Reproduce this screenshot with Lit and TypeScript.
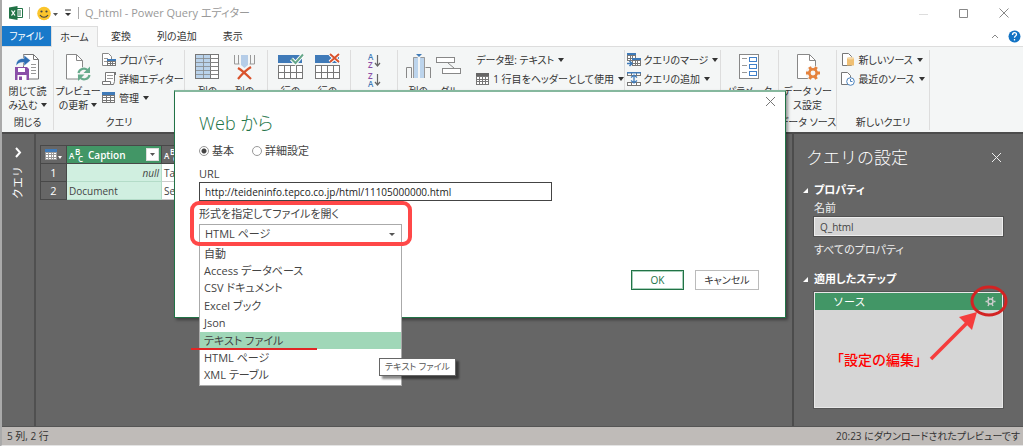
import { LitElement, html, css, svg, nothing, TemplateResult } from "lit";
import { customElement, property, state } from "lit/decorators.js";
import { classMap } from "lit/directives/class-map.js";

const table = (x: number, y: number, w: number, h: number, cols: number, rows: number, stroke = "#777") => svg`
  <rect x=${x + 0.5} y=${y + 0.5} width=${w} height=${h} fill="#fff" stroke=${stroke}/>
  ${Array.from({ length: cols - 1 }, (_, i) => {
    const px = Math.round(x + ((i + 1) * w) / cols) + 0.5;
    return svg`<path d="M${px} ${y + 1}v${h}" stroke=${stroke}/>`;
  })}
  ${Array.from({ length: rows - 1 }, (_, i) => {
    const py = Math.round(y + ((i + 1) * h) / rows) + 0.5;
    return svg`<path d="M${x + 1} ${py}h${w}" stroke=${stroke}/>`;
  })}`;

const large: Record<string, TemplateResult> = {
  close: svg`
    <path d="M8.500 .5h10l5 5v19.500h-15z" fill="#fff" stroke="#777"/><path d="M18.500 .5v5h5" fill="none" stroke="#777"/>
    <path d="M16 10.500h5M16 13.500h5M16 16.500h5M16 19.500h5" stroke="#999"/>
    <path d="M1 12C1 6 5 4 9 4.500V1l6.500 5.500L9 12V8.500C6 8 3 9 1 12z" fill="#2f6fb4" stroke="#fff" stroke-width=".5"/>
    <path d="M0 13h12l2 2v11H0z" fill="#8a4fa8"/><path d="M3 14h7v4H3zM2.500 21h9v5h-9z" fill="#fff"/><path d="M4 22.500h3V26H4z" fill="#8a4fa8"/>`,
  refresh: svg`
    <path d="M.5 .5h10l6 6v18.500H.5z" fill="#fff" stroke="#888"/><path d="M10.500 .5v6h6" fill="none" stroke="#888"/>
    <circle cx="18" cy="20" r="7" fill="#f5f6f6"/>
    <path d="M12.500 19a5.500 5.500 0 0 1 9-3M23.500 21a5.500 5.500 0 0 1-9 3" fill="none" stroke="#66ab8c" stroke-width="2.200"/>
    <path d="M24 12.500v6.500h-6.500zM12 27v-6.500h6.500z" fill="#66ab8c"/>`,
  chooseCols: svg`${table(0, 0, 23, 24, 3, 6)}<path d="M1 1h14v23H1z" fill="#a9c8e6" opacity=".8"/><path d="M8.500 1v23M1 4.500h22M1 8.500h22M1 12.500h22M1 16.500h22M1 20.500h22" stroke="#888" stroke-width=".7"/>`,
  removeCols: svg`
    <path d="M2.500 1v9h5M22.500 1v9h-5M6.500 1v9M18.500 1v9" fill="none" stroke="#999"/><path d="M9 1h7v10l-3.500 3L9 11z" fill="#b5cde8"/>
    <path d="M6 14c5 3 9 7 13 11M19 13c-5 3-9 7-13 12" stroke="#d9522c" stroke-width="2.200" fill="none"/>`,
  keepRows: svg`${table(0, 11, 24, 13, 4, 2)}<path d="M0 1h24v8H0z" fill="#3f7ab8"/><path d="M13.500 5l4 4L25 .5" fill="none" stroke="#fff" stroke-width="4"/><path d="M13.500 5l4 4L25 .5" fill="none" stroke="#66a78a" stroke-width="2"/>`,
  removeRows: svg`${table(0, 11, 24, 13, 4, 2)}<path d="M0 1h24v8H0z" fill="#3f7ab8"/><path d="M15 0l9 8M24 0l-9 8" stroke="#fff" stroke-width="4"/><path d="M15 0l9 8M24 0l-9 8" stroke="#d9522c" stroke-width="2"/>`,
  split: svg`
    <path d="M.5 24V13.500h5V24M24.500 24V13.500h-5" fill="none" stroke="#888"/><path d="M7 3h5v21H7zM14 3h5v21h-5z" fill="#bcd4ec"/>
    <path d="M7.500 24V3.500h4M18.500 24V3.500h-4" fill="none" stroke="#999"/><path d="M10 0h6l-3 3z" fill="#3f7ab8"/>`,
  group: svg`<rect x=".5" y="3.500" width="18" height="5" fill="#fff" stroke="#888"/><rect x="6.500" y="14.500" width="18" height="5" fill="#fff" stroke="#888"/><path d="M12 9l6 5" stroke="#888"/>`,
  params: svg`
    <rect x="2.500" y=".5" width="19" height="24" fill="#fff" stroke="#888"/>
    <path d="M5 4.500h5M5 11.500h5M5 18.500h5" stroke="#999"/>
    <g fill="#fff" stroke="#3f7fc8"><rect x="12.500" y="3.500" width="7" height="4"/><rect x="12.500" y="10.500" width="7" height="4"/><rect x="12.500" y="17.500" width="7" height="4"/></g>`,
  source: svg`
    <path d="M2.500 .5h12l6 6v18H2.500z" fill="#fff" stroke="#888"/><path d="M14.500 .5v6h6" fill="none" stroke="#888"/>
    <circle cx="18" cy="19" r="7.500" fill="#f5f6f6"/><circle cx="18" cy="19" r="3.700" fill="none" stroke="#e5823c" stroke-width="2.500"/>
    <path d="M22 19h3M11 19h3M20 15.500l1.500-2.600M16 22.500l-1.500 2.600M16 15.500l-1.500-2.600M20 22.500l1.500 2.600" stroke="#e5823c" stroke-width="3"/>`,
};

const small: Record<string, TemplateResult> = {
  props: svg`<path d="M.5 .5h6l3 3v9h-9z" fill="#fff" stroke="#888"/><path d="M2 5.500h4M2 8.500h4" stroke="#999"/>${table(5, 6, 8, 6, 3, 3)}<path d="M5 6h9v2H5z" fill="#3f7ab8"/>`,
  advanced: svg`<path d="M3.500 10.500v-10h9v9" fill="#fff" stroke="#777"/><path d="M.5 9.500h8v3h-8zM8.500 12.500h3l1-3" fill="#fff" stroke="#777"/><path d="M5 3.500h6M5 6.500h6" stroke="#999"/><path d="M12 0h2v3h-2z" fill="#777"/>`,
  manage: svg`${table(0, 1, 12, 10, 3, 4)}<path d="M0 1h13v3H0z" fill="#3f7ab8"/>`,
  header: svg`${table(0, 1, 12, 11, 4, 4)}<path d="M0 1h13v3H0z" fill="#666"/>`,
  merge: svg`${table(0, 0, 8, 7, 3, 3)}<path d="M0 0h9v2H0z" fill="#3f7ab8"/>${table(5, 5, 8, 7, 3, 3)}<path d="M5 5h9v2H5z" fill="#3f7ab8"/><path d="M0 10.500h4M2.500 8l2.500 2.500L2.500 13" stroke="#3f7ab8" stroke-width="1.500" fill="none"/>`,
  append: svg`${table(0, 0, 13, 3, 3, 1)}<path d="M0 0h14v1.500H0z" fill="#3f7ab8"/>${table(0, 10, 13, 3, 3, 1)}<path d="M7 4v6M4 5.500L7 3l3 2.500M4 8.500L7 11l3-2.500" stroke="#3f7ab8" stroke-width="1.300" fill="none"/>`,
  newSource: svg`<path d="M1.500 .5h6l3 3v9h-9z" fill="#fff" stroke="#777"/><path d="M6 5h7v7.500H6z" fill="#efbf73"/><ellipse cx="9.500" cy="5.200" rx="3.500" ry="1.200" fill="#f6d8a6"/>`,
  recent: svg`<path d="M.5 .5h6l3 3v9h-9z" fill="#fff" stroke="#777"/><circle cx="9.500" cy="9.500" r="3.800" fill="#fff" stroke="#4b82bd"/><path d="M9.500 7v2.500h2" fill="none" stroke="#4b82bd"/>`,
};

@customElement("ribbon-large")
class RibbonLarge extends LitElement {
  @property() icon = "";
  @property({ type: Array }) lines: string[] = [];
  @property({ type: Boolean }) menu = false;

  static styles = css`
    :host { display: block; }
    button {
      display: flex; flex-direction: column; align-items: center; width: 100%;
      border: 0; padding: 4px 0 0; background: none; font: inherit; color: inherit;
      white-space: nowrap; font-feature-settings: inherit;
    }
    svg { display: block; margin-bottom: 2px; overflow: visible; }
    .caret { display: inline-block; border: 3px solid transparent; border-top: 4px solid #333; border-bottom: 0; margin: 0 0 2px 3px; }
    .line { line-height: 14px; }
  `;

  render() {
    return html`<button type="button">
      <svg width="25" height="28" viewBox="0 0 25 28" aria-hidden="true">${large[this.icon]}</svg>
      ${this.lines.map((t, i) => html`<span class="line">${t}${this.menu && i === this.lines.length - 1 ? html`<span class="caret"></span>` : nothing}</span>`)}
    </button>`;
  }
}

@customElement("ribbon-small")
class RibbonSmall extends LitElement {
  @property() icon = "";
  @property() label = "";
  @property({ type: Boolean }) menu = false;

  static styles = css`
    :host { display: block; }
    button {
      display: flex; align-items: center; height: 19px; padding: 0; border: 0; gap: 2px;
      background: none; font: inherit; color: inherit; white-space: nowrap; font-feature-settings: inherit;
    }
    svg { flex: none; }
    .caret { border: 3px solid transparent; border-top: 4px solid #333; border-bottom: 0; margin-left: 2px; }
  `;

  render() {
    return html`<button type="button">
      ${this.icon ? html`<svg width="15" height="14" viewBox="0 0 15 14" aria-hidden="true">${small[this.icon]}</svg>` : nothing}
      <span>${this.label}</span>${this.menu ? html`<span class="caret"></span>` : nothing}
    </button>`;
  }
}

@customElement("web-dialog")
class WebDialog extends LitElement {
  @state() private formats = ["自動", "Access データベース", "CSV ドキュメント", "Excel ブック", "Json", "テキスト ファイル", "HTML ページ", "XML テーブル"];
  @state() private active = "テキスト ファイル";

  static styles = css`
    :host {
      display: flex; flex-direction: column; box-sizing: border-box; background: #fff; color: #444;
      border: 1px solid #217346; border-top: 2px solid #86b89e; padding: 20px 26px 27px 24px;
      box-shadow: 2px 2px 3px rgba(0, 0, 0, 0.4); line-height: 16px; font-feature-settings: "palt";
    }
    h1 { margin: 0; font-size: 18px; line-height: 22px; font-weight: 300; color: #217346; }
    .close { position: absolute; top: 4px; right: 9px; border: 0; padding: 0; background: none; line-height: 0; }
    .modes { display: flex; gap: 18px; margin: 9px 0 7px; }
    .mode { display: flex; align-items: center; gap: 3px; }
    .mode input {
      appearance: none; width: 10px; height: 10px; margin: 0; border: 1px solid #999; border-radius: 50%; background: #fff;
    }
    .mode input:checked { background: radial-gradient(circle, #444 0 2px, #fff 3px); }
    .url {
      display: block; box-sizing: border-box; width: 353px; height: 19px; padding: 0 5px; margin: 0 0 5px;
      border: 1px solid #444; font: inherit; font-size: 10px; color: #222; background: #fff;
    }
    .field { display: block; }
    .combo { position: relative; width: 203px; margin-top: 2px; }
    select {
      appearance: none; display: block; box-sizing: border-box; width: 100%; height: 19px; padding: 0 5px;
      border: 1px solid #aaa; border-radius: 0; background: #fff; font: inherit; color: #444; font-feature-settings: inherit;
    }
    .arrow { position: absolute; right: 7px; top: 9px; border: 3px solid transparent; border-top-color: #555; border-bottom: 0; }
    .list {
      position: absolute; z-index: 1; top: 20px; left: 0; box-sizing: border-box; width: 100%; height: 142px; margin: 0; padding: 0 0 1px;
      display: grid; grid-auto-rows: 1fr; list-style: none; background: #fff; border: 1px solid #aaa;
    }
    .list li { padding: 0 4px; display: flex; align-items: center; }
    .list .on { background: #a0d7b8; }
    .underline { position: absolute; z-index: 3; left: -8px; top: 124px; width: 126px; height: 2px; background: #e22626; }
    .mark { position: absolute; z-index: 2; left: -9px; top: -23px; width: 214px; height: 37px; border: 4px solid #ff4848; border-radius: 9px; }
    .tip {
      position: absolute; z-index: 3; left: 180px; top: 134px; border: 1px solid #666; background: #fff; padding: 0 5px;
      white-space: nowrap; box-shadow: 3px 3px 2px rgba(0, 0, 0, 0.45); font-size: 9px; line-height: 16px; color: #555;
    }
    .actions { display: flex; justify-content: flex-end; gap: 11px; margin-top: auto; }
    .actions button { height: 20px; width: 64px; padding: 0; border: 1px solid #bbb; background: #fff; font: inherit; font-size: 10px; color: #333; }
    .actions .ok { width: 53px; border: 1px solid #217346; color: #217346; outline: 1px solid #a9d0bb; outline-offset: -2px; }
  `;

  render() {
    return html`
      <button class="close" type="button" aria-label="閉じる"><svg width="11" height="11"><path d="M1 1l9 9M10 1l-9 9" stroke="#777"/></svg></button>
      <h1>Web から</h1>
      <div class="modes">
        <label class="mode"><input type="radio" name="mode" checked />基本</label>
        <label class="mode"><input type="radio" name="mode" />詳細設定</label>
      </div>
      <label class="field" for="url">URL</label>
      <input class="url" id="url" type="text" .value=${"http://teideninfo.tepco.co.jp/html/11105000000.html"} />
      <label class="field" for="format">形式を指定してファイルを開く</label>
      <div class="combo">
        <select id="format">${this.formats.map((f) => html`<option ?selected=${f === "HTML ページ"}>${f}</option>`)}</select>
        <span class="arrow"></span>
        <ul class="list" role="listbox">
          ${this.formats.map((f) => html`<li role="option" class=${classMap({ on: f === this.active })} @mouseenter=${() => (this.active = f)}>${f}</li>`)}
        </ul>
        <div class="mark"></div>
        <div class="underline"></div>
        <div class="tip" role="tooltip">テキスト ファイル</div>
      </div>
      <div class="actions">
        <button class="ok" type="button">OK</button>
        <button type="button">キャンセル</button>
      </div>`;
  }
}

@customElement("query-settings")
class QuerySettings extends LitElement {
  static styles = css`
    :host { display: block; box-sizing: border-box; width: 231px; padding: 12px 20px 18px 20px; border-left: 2px solid #4c4c4c; color: #eee; line-height: 16px; }
    .head { display: flex; align-items: center; justify-content: space-between; margin-left: -8px; }
    h2 { margin: 0; font-size: 17px; line-height: 24px; font-weight: 300; color: #fff; }
    .head button { border: 0; padding: 0; background: none; line-height: 0; }
    h3 { margin: 0; font-size: 11px; line-height: 16px; font-weight: 700; color: #fff; position: relative; font-feature-settings: "palt"; }
    h3::before { content: ""; position: absolute; left: -11px; top: 6px; border-left: 5px solid transparent; border-bottom: 5px solid #fff; }
    .first { margin-top: 12px; }
    label { display: block; margin: 2px 0 1px; }
    input {
      display: block; box-sizing: border-box; width: 100%; height: 19px; padding: 0 5px;
      border: 1px solid #eee; background: #d4d4d4; font: inherit; font-size: 10px; color: #444; outline: 1px solid #505050;
    }
    .all { display: block; margin: 6px 0 13px; color: #eee; text-decoration: none; font-feature-settings: "palt"; }
    .steps { position: relative; margin-top: 5px; height: 116px; box-sizing: border-box; border: 1px solid #e8e8e8; outline: 1px solid #555; background: #d6d6d6; }
    .step { display: flex; align-items: center; justify-content: space-between; height: 17px; padding: 0 6px 0 18px; background: #429666; color: #fff; }
    .note { position: absolute; left: 15px; top: 57px; font-size: 14px; line-height: 20px; color: #f00; font-weight: 500; white-space: nowrap; }
    .arrow { position: absolute; left: -1px; top: -12px; overflow: visible; }
  `;

  render() {
    return html`
      <div class="head"><h2>クエリの設定</h2>
        <button type="button" aria-label="閉じる"><svg width="13" height="12"><path d="M2 1l9 9M11 1l-9 9" stroke="#eee"/></svg></button></div>
      <h3 class="first">プロパティ</h3>
      <label for="name">名前</label>
      <input id="name" type="text" .value=${"Q_html"} />
      <a class="all" href="#">すべてのプロパティ</a>
      <h3>適用したステップ</h3>
      <div class="steps">
        <div class="step"><span>ソース</span>
          <svg width="11" height="11" viewBox="0 0 11 11" aria-hidden="true"><circle cx="5.500" cy="5.500" r="2.500" fill="none" stroke="#ccc" stroke-width="1.500"/><path d="M.5 5.500h2M8.500 5.500h2M3 1l1 2M8 1L7 3M3 10l1-2M8 10L7 8" stroke="#ccc" stroke-width="1.500"/></svg>
        </div>
        <span class="note">「設定の編集」</span>
        <svg class="arrow" width="190" height="128" viewBox="0 0 190 128" aria-hidden="true">
          <ellipse cx="175" cy="20" rx="17" ry="14" fill="none" stroke="#d32323" stroke-width="3"/>
          <path d="M117 78L155 40" stroke="#f53d3d" stroke-width="3.500"/><path d="M163 31l-18 5 13 13z" fill="#f53d3d"/>
        </svg>
      </div>`;
  }
}

@customElement("app-root")
class AppRoot extends LitElement {
  static styles = css`
    :host {
      display: flex; flex-direction: column; box-sizing: border-box; min-height: 100vh; position: relative; overflow: hidden;
      border-left: 2px solid #aaa; border-bottom: 2px solid #e4e4e4; background: #fff; color: #444;
      font: 11px/14px "Open Sans", "Noto Sans CJK JP", sans-serif;
    }
    .title { display: flex; align-items: center; height: 26px; padding: 0 14px 0 7px; gap: 6px; color: #999; font-feature-settings: "palt"; }
    .title .name { flex: 1; }
    .title .bar { width: 1px; height: 12px; background: #aaa; }
    .title .win { border: 0; background: none; padding: 0; line-height: 0; margin-left: 25px; }
    .tabs { display: flex; align-items: stretch; height: 21px; font-size: 10px; font-feature-settings: "palt"; border-bottom: 1px solid #ddd; box-sizing: border-box; }
    .tabs button { border: 0; background: none; padding: 0 13px; font: inherit; color: #333; font-feature-settings: inherit; }
    .tabs .file { background: #1979ca; color: #fff; width: 49px; padding: 0; }
    .tabs .home { background: #f5f6f6; width: 47px; padding: 0; margin-bottom: -1px; border: 1px solid #ddd; border-bottom: 0; }
    .tabs .end { margin-left: auto; display: flex; align-items: center; gap: 9px; padding-right: 2px; }
    .ribbon { display: flex; height: 85px; padding-top: 3px; box-sizing: border-box; background: #f4f6f6; font-size: 10px; color: #333; font-feature-settings: "palt"; }
    .group { display: flex; flex-direction: column; flex: none; box-sizing: border-box; border-right: 1px solid #ddd; margin-bottom: 2px; }
    .body { display: flex; flex: 1; justify-content: center; }
    .caption { text-align: center; white-space: nowrap; line-height: 16px; }
    .stack { display: flex; flex-direction: column; }
    .w52 { width: 52px; }
    .w58 { width: 58px; }
    .w83 { width: 83px; }
    .w47 { width: 47px; }
    .w93 { width: 93px; }
    .w96 { width: 96px; }
    .w131 { width: 131px; }
    .w227 { width: 227px; }
    .w83 ribbon-large, .w227 ribbon-large { width: 37px; }
    .w131 .body, .w227 .body { justify-content: flex-start; }
    .w131 ribbon-large { width: 48px; }
    .w227 .body { padding-left: 5px; }
    .w227 .stack { padding-left: 12px; }
    .sort { display: block; margin-top: 3px; overflow: visible; }
    .sort text { font-size: 8px; font-weight: 600; }
    .main { flex: 1; display: flex; background: #666; border-top: 2px solid #4c4c4c; box-sizing: border-box; }
    .side { width: 34px; box-sizing: border-box; border-right: 2px solid #505050; display: flex; flex-direction: column; align-items: center; padding-top: 13px; gap: 8px; color: #fff; }
    .side button { border: 0; padding: 0; background: none; line-height: 0; }
    .side span { writing-mode: vertical-rl; text-orientation: sideways; transform: rotate(180deg); }
    .data { flex: 1; padding: 11px 4px; }
    table { border-collapse: collapse; font-size: 10px; }
    th, td { height: 18px; box-sizing: border-box; padding: 0 2px; border: 1px solid #484848; text-align: left; line-height: 14px; }
    th { background: #666; color: #fff; font-weight: 400; }
    .rownum { width: 26px; text-align: center; font-size: 11px; }
    .corner { width: 26px; padding: 0 0 0 4px; line-height: 0; }
    .caption-col { width: 95px; background: #429666; font-weight: 600; padding: 0 2px; }
    .colhead { display: flex; align-items: center; gap: 4px; }
    .colhead button { margin-left: auto; width: 13px; height: 13px; padding: 0; border: 1px solid #ddd; background: #fff; line-height: 0; }
    .sel { background: #d0efe0; border-color: #b4dcc8; }
    .null { text-align: right; font-style: italic; }
    .plain { background: #fff; width: 150px; border-color: #ccc; }
    .status { display: flex; justify-content: space-between; align-items: center; height: 19px; padding: 0 3px 0 5px; background: #bfbbb8; border-top: 1px solid #555; box-sizing: border-box; font-size: 10px; color: #333; font-feature-settings: "palt"; }
    .abc { flex: none; display: block; overflow: visible; }
    .abc text { font-size: 8px; font-weight: 600; fill: #fff; }
    web-dialog { position: absolute; z-index: 2; left: 172px; top: 90px; width: 612px; height: 228px; }
  `;

  private abc() {
    return html`<svg class="abc" width="15" height="16" viewBox="0 0 15 16" role="img" aria-label="ABC"><text x="0" y="12">A</text><text x="6" y="8">B</text><text x="9" y="15">C</text></svg>`;
  }

  render() {
    return html`
      <div class="title">
        <svg width="14" height="14" viewBox="0 0 14 14" aria-hidden="true"><path d="M7 2.500h6.500v9H7" fill="#fff" stroke="#217346"/><path d="M9 5h3M9 7h3M9 9h3" stroke="#217346"/><path d="M0 1.500L8.500 0v14L0 12.500z" fill="#217346"/><path d="M2.500 4.500l3.500 5M6 4.500l-3.500 5" stroke="#fff" stroke-width="1.300"/></svg>
        <span class="bar"></span>
        <svg width="22" height="15" viewBox="0 0 22 15" aria-hidden="true"><circle cx="8" cy="7.500" r="6.800" fill="#fbc52c"/><circle cx="5.500" cy="5.500" r="1.100" fill="#444"/><circle cx="10.500" cy="5.500" r="1.100" fill="#444"/><path d="M4 9c2 3 6 3 8 0" fill="none" stroke="#444" stroke-width="1.200"/><path d="M17 7h5l-2.500 3z" fill="#555"/></svg>
        <svg width="8" height="8" viewBox="0 0 8 8" aria-hidden="true"><path d="M1 1h6" stroke="#333"/><path d="M1 4h6L4 7z" fill="#333"/></svg>
        <span class="bar"></span>
        <span class="name">Q_html - Power Query エディター</span>
        <button class="win" type="button" aria-label="最小化"><svg width="9" height="9"><path d="M0 5.500h9" stroke="#ddd"/></svg></button>
        <button class="win" type="button" aria-label="最大化"><svg width="9" height="9"><path d="M.5 .5h8v8h-8z" fill="none" stroke="#888"/></svg></button>
        <button class="win" type="button" aria-label="閉じる"><svg width="10" height="10"><path d="M.5 .5l9 9M9.500 .5l-9 9" stroke="#888"/></svg></button>
      </div>
      <nav class="tabs">
        <button class="file" type="button">ファイル</button>
        <button class="home" type="button">ホーム</button>
        <button type="button">変換</button>
        <button type="button">列の追加</button>
        <button type="button">表示</button>
        <span class="end">
          <svg width="8" height="6" aria-hidden="true"><path d="M1 5l3-3 3 3" fill="none" stroke="#888"/></svg>
          <svg width="13" height="13" aria-hidden="true"><circle cx="6.500" cy="6.500" r="6" fill="#1273c4"/><path d="M4.500 5c0-3 4-3 4-.5 0 1.500-2 1.500-2 3.200M6.500 9v1.500" fill="none" stroke="#fff" stroke-width="1.300"/></svg>
        </span>
      </nav>
      <div class="ribbon">
        <div class="group w52"><div class="body"><ribbon-large icon="close" .lines=${["閉じて読", "み込む"]} menu></ribbon-large></div><div class="caption">閉じる</div></div>
        <div class="group w131">
          <div class="body">
            <ribbon-large icon="refresh" .lines=${["プレビュー", "の更新"]} menu></ribbon-large>
            <div class="stack">
              <ribbon-small icon="props" label="プロパティ"></ribbon-small>
              <ribbon-small icon="advanced" label="詳細エディター"></ribbon-small>
              <ribbon-small icon="manage" label="管理" menu></ribbon-small>
            </div>
          </div>
          <div class="caption">クエリ</div>
        </div>
        <div class="group w83"><div class="body"><ribbon-large icon="chooseCols" .lines=${["列の", "選択"]}></ribbon-large><ribbon-large icon="removeCols" .lines=${["列の", "削除"]}></ribbon-large></div></div>
        <div class="group w83"><div class="body"><ribbon-large icon="keepRows" .lines=${["行の", "保持"]}></ribbon-large><ribbon-large icon="removeRows" .lines=${["行の", "削除"]}></ribbon-large></div></div>
        <div class="group w47"><div class="body">
          <svg class="sort" width="12" height="36" viewBox="0 0 12 36" role="img" aria-label="並べ替え">
            <text x="0" y="7" fill="#3f7ab8">A</text><text x="0" y="15" fill="#8a4fa8">Z</text><text x="0" y="26" fill="#8a4fa8">Z</text><text x="0" y="34" fill="#3f7ab8">A</text>
            <path d="M9.500 2v11M7 10l2.500 3 2.500-3M9.500 21v11M7 29l2.500 3 2.500-3" fill="none" stroke="#666" stroke-width="1.200"/>
          </svg></div></div>
        <div class="group w227">
          <div class="body">
            <ribbon-large icon="split" .lines=${["列の", "分割"]}></ribbon-large>
            <ribbon-large icon="group" .lines=${["グル", "ープ化"]}></ribbon-large>
            <div class="stack">
              <ribbon-small label="データ型: テキスト" menu></ribbon-small>
              <ribbon-small icon="header" label="1 行目をヘッダーとして使用" menu></ribbon-small>
            </div>
          </div>
        </div>
        <div class="group w96"><div class="body"><div class="stack">
          <ribbon-small icon="merge" label="クエリのマージ" menu></ribbon-small>
          <ribbon-small icon="append" label="クエリの追加" menu></ribbon-small>
        </div></div></div>
        <div class="group w58"><div class="body"><ribbon-large icon="params" .lines=${["パラメータ", "の管理"]}></ribbon-large></div></div>
        <div class="group w58"><div class="body"><ribbon-large icon="source" .lines=${["データ ソー", "ス設定"]}></ribbon-large></div><div class="caption">データ ソース</div></div>
        <div class="group w93"><div class="body"><div class="stack">
          <ribbon-small icon="newSource" label="新しいソース" menu></ribbon-small>
          <ribbon-small icon="recent" label="最近のソース" menu></ribbon-small>
        </div></div><div class="caption">新しいクエリ</div></div>
      </div>
      <div class="main">
        <div class="side">
          <button type="button" aria-label="展開"><svg width="8" height="11"><path d="M2 1l4 4.500L2 10" fill="none" stroke="#fff" stroke-width="2"/></svg></button>
          <span>クエリ</span>
        </div>
        <div class="data">
          <table>
            <tr>
              <th class="corner"><svg width="18" height="11" viewBox="0 0 18 11" role="img" aria-label="テーブル">${table(0, 0, 11, 10, 4, 4, "#999")}<path d="M0 0h12v3H0z" fill="#3f7ab8"/><path d="M13 7h4l-2 3z" fill="#fff"/></svg></th>
              <th class="caption-col"><div class="colhead">${this.abc()}<span>Caption</span><button type="button" aria-label="フィルター"><svg width="9" height="9"><path d="M2 3h5L4.500 6z" fill="#555"/></svg></button></div></th>
              <th>${this.abc()}</th>
            </tr>
            <tr><th class="rownum">1</th><td class="sel null">null</td><td class="plain">Table</td></tr>
            <tr><th class="rownum">2</th><td class="sel">Document</td><td class="plain">Service</td></tr>
          </table>
        </div>
        <query-settings></query-settings>
      </div>
      <div class="status"><span>5 列, 2 行</span><span>20:23 にダウンロードされたプレビューです</span></div>
      <web-dialog></web-dialog>`;
  }
}
